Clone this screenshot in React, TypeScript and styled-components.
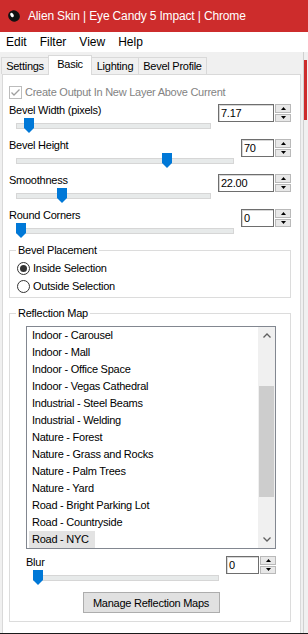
import { FC } from 'react'

import styled, { createGlobalStyle } from 'styled-components'

const UI_FONT = `"Liberation Sans", "Noto Sans", sans-serif`

const MAPS = [
  'Indoor - Carousel',
  'Indoor - Mall',
  'Indoor - Office Space',
  'Indoor - Vegas Cathedral',
  'Industrial - Steel Beams',
  'Industrial - Welding',
  'Nature - Forest',
  'Nature - Grass and Rocks',
  'Nature - Palm Trees',
  'Nature - Yard',
  'Road - Bright Parking Lot',
  'Road - Countryside',
  'Road - NYC',
]

const TABS = [
  { name: 'Settings', width: 48 },
  { name: 'Basic', width: 44 },
  { name: 'Lighting', width: 48 },
  { name: 'Bevel Profile', width: 69 },
]

const GlobalStyle = createGlobalStyle`
  * {
    box-sizing: border-box;
  }

  body {
    margin: 0;
    background: #f0f0f0;
    font-family: ${UI_FONT};
  }
`

type FieldProps = {
  label: string
  value: string
  frac: number
  wide?: boolean
}

const Field: FC<FieldProps> = ({ label, value, frac, wide }) => (
  <StyledField>
    <StyledFieldLabel>{label}</StyledFieldLabel>
    <Spinner value={value} wide={wide} />
    <StyledTrack>
      <StyledThumb
        viewBox="0 0 10 15"
        style={{ left: `calc((100% - 10px) * ${frac})` }}
      >
        <polygon points="0,0 10,0 10,10 5,15 0,10" fill="#0078d7" />
      </StyledThumb>
    </StyledTrack>
  </StyledField>
)

const Spinner: FC<{ value: string; wide?: boolean }> = ({ value, wide }) => (
  <StyledSpinner>
    <StyledSpinText $wide={wide}>{value}</StyledSpinText>
    <StyledSpinButtons>
      <StyledSpinButton>
        <svg width="5" height="3" viewBox="0 0 5 3">
          <polygon points="0,3 2.5,0 5,3" fill="#000" />
        </svg>
      </StyledSpinButton>
      <StyledSpinButton>
        <svg width="5" height="3" viewBox="0 0 5 3">
          <polygon points="0,0 5,0 2.5,3" fill="#000" />
        </svg>
      </StyledSpinButton>
    </StyledSpinButtons>
  </StyledSpinner>
)

export default function App() {
  return (
    <>
      <GlobalStyle />
      <StyledWindow>
        <StyledTitleBar>
          <svg width="16" height="16" viewBox="0 0 16 16">
            <ellipse
              cx="8"
              cy="8"
              rx="6"
              ry="5.5"
              transform="rotate(30 8 8)"
              fill="#111"
            />
            <ellipse
              cx="6"
              cy="7"
              rx="1.6"
              ry="2.4"
              transform="rotate(-30 6 7)"
              fill="#fff"
            />
          </svg>
          <StyledTitle>Alien Skin | Eye Candy 5 Impact | Chrome</StyledTitle>
        </StyledTitleBar>

        <StyledMenuBar>
          <span>Edit</span>
          <span>Filter</span>
          <span>View</span>
          <span>Help</span>
        </StyledMenuBar>

        <StyledBody>
          <StyledMain>
            <StyledTabStrip>
              {TABS.map((tab) => (
                <StyledTab
                  key={tab.name}
                  $width={tab.width}
                  $active={tab.name === 'Basic'}
                >
                  {tab.name}
                </StyledTab>
              ))}
            </StyledTabStrip>

            <StyledPanel>
              <StyledCheckRow>
                <svg width="13" height="13" viewBox="0 0 13 13">
                  <rect
                    x="0.5"
                    y="0.5"
                    width="12"
                    height="12"
                    fill="#fff"
                    stroke="#bcbcbc"
                  />
                  <polyline
                    points="2.5,6.5 5,9 10.5,3.5"
                    fill="none"
                    stroke="#9f9f9f"
                    strokeWidth="1.3"
                  />
                </svg>
                Create Output In New Layer Above Current
              </StyledCheckRow>

              <Field label="Bevel Width (pixels)" value="7.17" frac={0.043} wide />
              <Field label="Bevel Height" value="70" frac={0.7} />
              <Field label="Smoothness" value="22.00" frac={0.22} wide />
              <Field label="Round Corners" value="0" frac={0} />

              <StyledGroup>
                <StyledLegend>Bevel Placement</StyledLegend>
                <StyledPlacementBody>
                  <StyledRadioRow>
                    <StyledRadio $checked />
                    Inside Selection
                  </StyledRadioRow>
                  <StyledRadioRow>
                    <StyledRadio />
                    Outside Selection
                  </StyledRadioRow>
                </StyledPlacementBody>
              </StyledGroup>

              <StyledReflectionGroup>
                <StyledLegend>Reflection Map</StyledLegend>
                <StyledReflectionBody>
                  <StyledListBox>
                    <StyledListItems>
                      {MAPS.map((item) => (
                        <StyledListItem key={item}>
                          <StyledItemText $selected={item === 'Road - NYC'}>
                            {item}
                          </StyledItemText>
                        </StyledListItem>
                      ))}
                    </StyledListItems>
                    <StyledScrollBar>
                      <StyledScrollArrow>
                        <svg width="8" height="5" viewBox="0 0 8 5">
                          <polyline
                            points="0.5,4.5 4,1 7.5,4.5"
                            fill="none"
                            stroke="#606060"
                            strokeWidth="1.3"
                          />
                        </svg>
                      </StyledScrollArrow>
                      <StyledScrollTrack>
                        <StyledScrollThumb />
                      </StyledScrollTrack>
                      <StyledScrollArrow>
                        <svg width="8" height="5" viewBox="0 0 8 5">
                          <polyline
                            points="0.5,0.5 4,4 7.5,0.5"
                            fill="none"
                            stroke="#606060"
                            strokeWidth="1.3"
                          />
                        </svg>
                      </StyledScrollArrow>
                    </StyledScrollBar>
                  </StyledListBox>

                  <StyledBlurField>
                    <Field label="Blur" value="0" frac={0} />
                  </StyledBlurField>

                  <StyledButton>Manage Reflection Maps</StyledButton>
                </StyledReflectionBody>
              </StyledReflectionGroup>
            </StyledPanel>
          </StyledMain>

          <StyledEdge>
            <StyledEdgeRed />
          </StyledEdge>
        </StyledBody>
      </StyledWindow>
    </>
  )
}

const StyledWindow = styled.div`
  width: 308px;
  height: 634px;
  display: flex;
  flex-direction: column;
  background: #f0f0f0;
  border-bottom: 1px solid #1a1a1a;
  font-size: 12px;
  color: #000;
  overflow: hidden;
`

const StyledTitleBar = styled.div`
  height: 32px;
  flex: none;
  display: flex;
  align-items: center;
  gap: 6px;
  padding-left: 6px;
  background: #cd2c2c;
`

const StyledTitle = styled.span`
  color: #fff;
  font-size: 12px;
  letter-spacing: -0.15px;
`

const StyledMenuBar = styled.div`
  height: 20px;
  flex: none;
  display: flex;
  align-items: center;
  gap: 13px;
  padding-left: 6px;
  background: #fff;
`

const StyledBody = styled.div`
  flex: 1;
  display: flex;
  min-height: 0;
  font-size: 11px;
  letter-spacing: -0.25px;
`

const StyledMain = styled.div`
  width: 301px;
  display: flex;
  flex-direction: column;
`

const StyledTabStrip = styled.div`
  position: relative;
  z-index: 1;
  height: 23px;
  display: flex;
  align-items: flex-end;
  padding: 3px 0 0 2px;
  margin-bottom: -1px;
`

const StyledTab = styled.div<{ $width: number; $active?: boolean }>`
  width: ${(p) => p.$width}px;
  height: ${(p) => (p.$active ? 20 : 17)}px;
  margin-bottom: ${(p) => (p.$active ? 0 : 1)}px;
  display: flex;
  align-items: center;
  justify-content: center;
  padding-bottom: ${(p) => (p.$active ? 3 : 0)}px;
  border: 1px solid #d9d9d9;
  border-bottom: none;
  margin-left: -1px;
  white-space: nowrap;
  background: ${(p) => (p.$active ? '#fff' : '#f0f0f0')};
`

const StyledPanel = styled.div`
  flex: 1;
  margin-left: 2px;
  padding: 10px 9px 0 6px;
  background: #fff;
  border: 1px solid #d9d9d9;
  border-bottom: none;
`

const StyledCheckRow = styled.div`
  height: 14px;
  display: flex;
  align-items: center;
  gap: 3px;
  margin-bottom: 4px;
  color: #838383;
`

const StyledField = styled.div`
  height: 35px;
  display: grid;
  grid-template-columns: 1fr auto;
  grid-template-rows: 14px 21px;
  column-gap: 7px;
`

const StyledFieldLabel = styled.div`
  grid-column: 1;
  grid-row: 1;
  line-height: 14px;
`

const StyledSpinner = styled.div`
  grid-column: 2;
  grid-row: 1 / 3;
  align-self: start;
  margin-top: 1px;
  height: 18px;
  display: flex;
`

const StyledSpinText = styled.div<{ $wide?: boolean }>`
  width: ${(p) => (p.$wide ? 56 : 33)}px;
  height: 18px;
  padding-left: 2px;
  line-height: 16px;
  background: #fff;
  border: 1px solid #6e6e6e;
  box-shadow: inset 1px 1px 0 #d6d6d6;
`

const StyledSpinButtons = styled.div`
  width: 17px;
  display: flex;
  flex-direction: column;
  gap: 1px;
  padding: 0 0 0 1px;
`

const StyledSpinButton = styled.div`
  flex: 1;
  display: flex;
  align-items: center;
  justify-content: center;
  background: #e8e8e8;
  border: 1px solid #b9b9b9;
`

const StyledTrack = styled.div`
  grid-column: 1;
  grid-row: 2;
  position: relative;
  margin-left: 7px;

  &::before {
    content: '';
    position: absolute;
    left: 0;
    right: 0;
    top: 6px;
    height: 4px;
    background: #e7eaea;
    border: 1px solid #d6d6d6;
  }
`

const StyledThumb = styled.svg`
  position: absolute;
  top: 1px;
  width: 10px;
  height: 15px;
`

const StyledGroup = styled.fieldset`
  margin: 0;
  padding: 0;
  min-width: 0;
  border: 1px solid #dcdcdc;
`

const StyledReflectionGroup = styled(StyledGroup)`
  margin-top: 8px;
`

const StyledLegend = styled.legend`
  margin-left: 6px;
  padding: 0 2px;
  line-height: 14px;
`

const StyledPlacementBody = styled.div`
  padding: 2px 7px 2px;
`

const StyledRadioRow = styled.div`
  height: 18px;
  display: flex;
  align-items: center;
  gap: 3px;
`

const StyledRadio = styled.span<{ $checked?: boolean }>`
  width: 13px;
  height: 13px;
  border-radius: 50%;
  border: 1px solid #333;
  background: #fff;
  display: flex;
  align-items: center;
  justify-content: center;

  &::after {
    content: '';
    width: 7px;
    height: 7px;
    border-radius: 50%;
    background: ${(p) => (p.$checked ? '#333' : 'transparent')};
  }
`

const StyledReflectionBody = styled.div`
  display: flex;
  flex-direction: column;
  padding: 6px 14px 8px 16px;
`

const StyledListBox = styled.div`
  height: 223px;
  display: flex;
  background: #fff;
  border: 1px solid #828790;
`

const StyledListItems = styled.div`
  flex: 1;
  padding-left: 2px;
`

const StyledListItem = styled.div`
  height: 17px;
  display: flex;
`

const StyledItemText = styled.span<{ $selected?: boolean }>`
  padding: 0 6px 0 3px;
  line-height: 17px;
  background: ${(p) => (p.$selected ? '#e3e3e3' : 'transparent')};
`

const StyledScrollBar = styled.div`
  width: 17px;
  display: flex;
  flex-direction: column;
  background: #f0f0f0;
`

const StyledScrollArrow = styled.div`
  height: 17px;
  display: flex;
  align-items: center;
  justify-content: center;
`

const StyledScrollTrack = styled.div`
  flex: 1;
  padding: 42px 1px 0;
`

const StyledScrollThumb = styled.div`
  height: 111px;
  background: #cdcdcd;
`

const StyledBlurField = styled.div`
  margin-top: 6px;
`

const StyledButton = styled.div`
  align-self: center;
  width: 137px;
  height: 21px;
  margin-top: 2px;
  display: flex;
  align-items: center;
  justify-content: center;
  background: #e1e1e1;
  border: 1px solid #adadad;
`

const StyledEdge = styled.div`
  flex: 1;
  display: flex;
  justify-content: flex-end;
  padding-right: 1px;
  border-left: 2px solid #f0f0f0;
  box-shadow: inset 1px 0 0 #d0d0d0;
`

const StyledEdgeRed = styled.div`
  width: 3px;
  height: 60px;
  margin-top: 8px;
  background: #cd2c2c;
`
